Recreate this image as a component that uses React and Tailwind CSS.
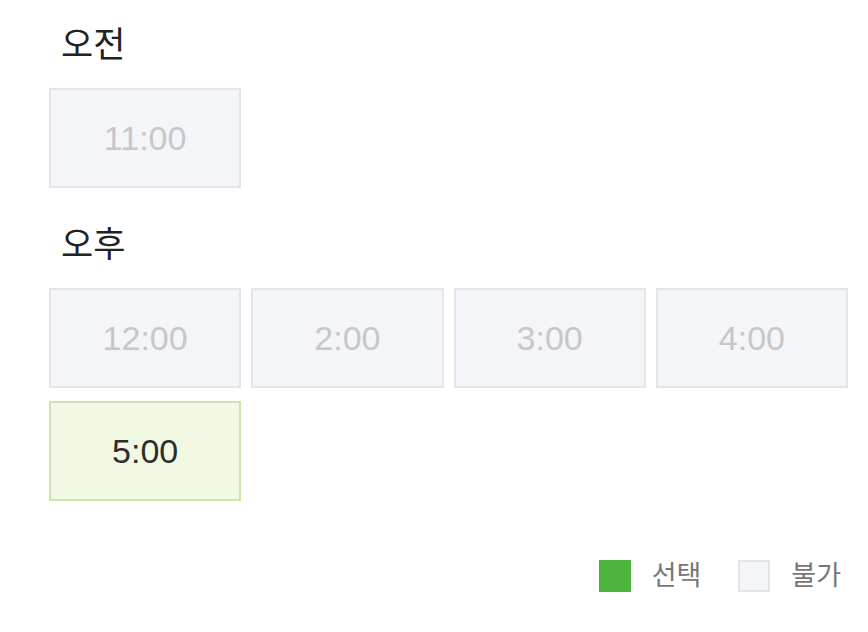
const morning = [{ time: '11:00', disabled: true }];

const afternoon = [
  { time: '12:00', disabled: true },
  { time: '2:00', disabled: true },
  { time: '3:00', disabled: true },
  { time: '4:00', disabled: true },
  { time: '5:00', selected: true },
];

function Slot({ slot }) {
  if (slot.selected) {
    return (
      <div className="h-[100px] flex items-center justify-center border-2 border-[#cde3b0] bg-[#f1f9e3] text-[#2d2d2d] text-[34px]">
        {slot.time}
      </div>
    );
  }
  return (
    <div className="h-[100px] flex items-center justify-center border-2 border-[#e3e5ea] bg-[#f4f5f8] text-[#c6c7cb] text-[34px]">
      {slot.time}
    </div>
  );
}

function Section({ title, slots, className }) {
  return (
    <div className={className}>
      <h2 className="pl-[12px] h-[50px] leading-[50px] text-[35px] text-[#222]">{title}</h2>
      <div className="mt-[18px] grid grid-cols-4 gap-x-[10px] gap-y-[13px]">
        {slots.map((s) => (
          <Slot key={s.time} slot={s} />
        ))}
      </div>
    </div>
  );
}

export default function App() {
  return (
    <div
      className="w-[868px] h-[632px] bg-white pl-[49px] pr-[20px] pt-[20px]"
      style={{ fontFamily: '"Liberation Sans", "Noto Sans CJK KR", sans-serif' }}
    >
      <Section title="오전" slots={morning} />
      <Section title="오후" slots={afternoon} className="mt-[32px]" />
      <div className="mt-[59px] flex items-center justify-end pr-[7px] text-[27px] text-[#777]">
        <span className="w-[32px] h-[32px] bg-[#4cb43c]" />
        <span className="ml-[21px] leading-none">선택</span>
        <span className="ml-[37px] w-[32px] h-[32px] border-2 border-[#e1e3e8] bg-[#f4f5f8]" />
        <span className="ml-[21px] leading-none">불가</span>
      </div>
    </div>
  );
}
